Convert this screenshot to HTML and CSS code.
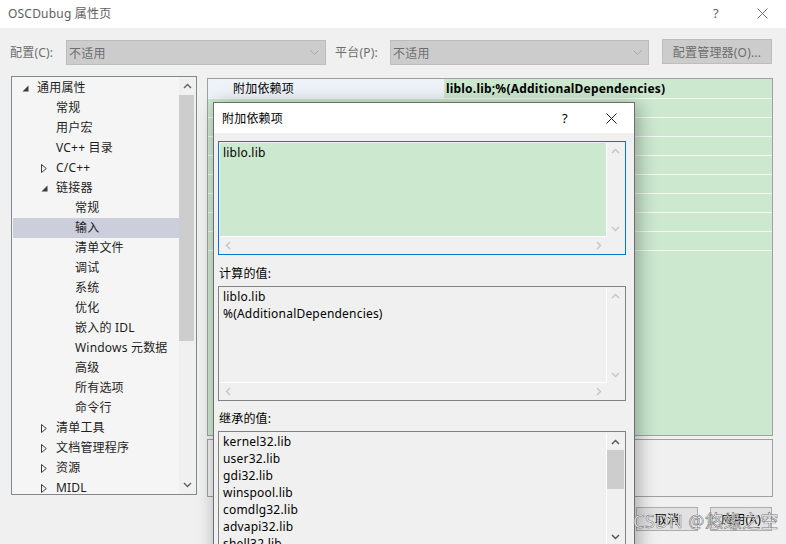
FILE: index.html
```html
<!DOCTYPE html>
<html lang="zh-CN">
<head>
<meta charset="utf-8">
<title>OSCDubug 属性页</title>
<link rel="stylesheet" href="styles.css">
</head>
<body>
<div class="window">
  <div class="titlebar">
    <span class="title">OSCDubug 属性页</span>
    <span class="tb-btn">?</span>
    <span class="tb-btn"><svg width="11" height="11" viewBox="0 0 11 11"><path d="M0.5 0.5L10.5 10.5M10.5 0.5L0.5 10.5" stroke="#707070" stroke-width="1" fill="none"/></svg></span>
  </div>

  <div class="config">
    <span class="cfg-label">配置(C):</span>
    <div class="combo combo-1"><span>不适用</span><svg width="9" height="5" viewBox="0 0 9 5"><path d="M0.5 0.5L4.5 4.5L8.5 0.5" stroke="#a8a8a8" fill="none"/></svg></div>
    <span class="cfg-label plat">平台(P):</span>
    <div class="combo combo-2"><span>不适用</span><svg width="9" height="5" viewBox="0 0 9 5"><path d="M0.5 0.5L4.5 4.5L8.5 0.5" stroke="#a8a8a8" fill="none"/></svg></div>
    <div class="cfg-btn">配置管理器(O)...</div>
  </div>

  <div class="main">
    <div class="tree">
      <ul class="tree-list">
        <li class="tree-row l0"><span class="arr"><svg width="7" height="7" viewBox="0 0 7 7"><path d="M6.5 0.5V6.5H0.5Z" fill="#3c3c3c"/></svg></span><span>通用属性</span></li>
        <li class="tree-row l1"><span class="arr"></span><span>常规</span></li>
        <li class="tree-row l1"><span class="arr"></span><span>用户宏</span></li>
        <li class="tree-row l1"><span class="arr"></span><span>VC++ 目录</span></li>
        <li class="tree-row l1"><span class="arr"><svg width="6" height="9" viewBox="0 0 6 9"><path d="M0.5 0.5L5.3 4.5L0.5 8.5Z" fill="none" stroke="#3c3c3c"/></svg></span><span>C/C++</span></li>
        <li class="tree-row l1"><span class="arr"><svg width="7" height="7" viewBox="0 0 7 7"><path d="M6.5 0.5V6.5H0.5Z" fill="#3c3c3c"/></svg></span><span>链接器</span></li>
        <li class="tree-row l2"><span class="arr"></span><span>常规</span></li>
        <li class="tree-row l2 selected"><span class="arr"></span><span>输入</span></li>
        <li class="tree-row l2"><span class="arr"></span><span>清单文件</span></li>
        <li class="tree-row l2"><span class="arr"></span><span>调试</span></li>
        <li class="tree-row l2"><span class="arr"></span><span>系统</span></li>
        <li class="tree-row l2"><span class="arr"></span><span>优化</span></li>
        <li class="tree-row l2"><span class="arr"></span><span>嵌入的 IDL</span></li>
        <li class="tree-row l2"><span class="arr"></span><span>Windows 元数据</span></li>
        <li class="tree-row l2"><span class="arr"></span><span>高级</span></li>
        <li class="tree-row l2"><span class="arr"></span><span>所有选项</span></li>
        <li class="tree-row l2"><span class="arr"></span><span>命令行</span></li>
        <li class="tree-row l1"><span class="arr"><svg width="6" height="9" viewBox="0 0 6 9"><path d="M0.5 0.5L5.3 4.5L0.5 8.5Z" fill="none" stroke="#3c3c3c"/></svg></span><span>清单工具</span></li>
        <li class="tree-row l1"><span class="arr"><svg width="6" height="9" viewBox="0 0 6 9"><path d="M0.5 0.5L5.3 4.5L0.5 8.5Z" fill="none" stroke="#3c3c3c"/></svg></span><span>文档管理程序</span></li>
        <li class="tree-row l1"><span class="arr"><svg width="6" height="9" viewBox="0 0 6 9"><path d="M0.5 0.5L5.3 4.5L0.5 8.5Z" fill="none" stroke="#3c3c3c"/></svg></span><span>资源</span></li>
        <li class="tree-row l1 last"><span class="arr"><svg width="6" height="9" viewBox="0 0 6 9"><path d="M0.5 0.5L5.3 4.5L0.5 8.5Z" fill="none" stroke="#3c3c3c"/></svg></span><span>MIDL</span></li>
      </ul>
      <div class="tree-scroll">
        <div class="sb-btn"><svg width="9" height="6" viewBox="0 0 9 6"><path d="M1 5L4.5 1.5L8 5" fill="none" stroke="#606060" stroke-width="1.4"/></svg></div>
        <div class="tree-thumb"></div>
        <div class="sb-fill"></div>
        <div class="sb-btn"><svg width="9" height="6" viewBox="0 0 9 6"><path d="M1 1L4.5 4.5L8 1" fill="none" stroke="#606060" stroke-width="1.4"/></svg></div>
      </div>
    </div>

    <div class="right">
      <div class="grid">
        <div class="grow first"><div class="gname">附加依赖项</div><div class="gval">liblo.lib;%(AdditionalDependencies)</div></div>
        <div class="grow"><div class="gname"></div><div class="gval"></div></div>
        <div class="grow"><div class="gname"></div><div class="gval"></div></div>
        <div class="grow"><div class="gname"></div><div class="gval"></div></div>
        <div class="grow"><div class="gname"></div><div class="gval"></div></div>
        <div class="grow"><div class="gname"></div><div class="gval"></div></div>
        <div class="grow"><div class="gname"></div><div class="gval"></div></div>
        <div class="grow"><div class="gname"></div><div class="gval"></div></div>
        <div class="grow"><div class="gname"></div><div class="gval"></div></div>
      </div>
      <div class="desc"></div>
      <div class="buttons">
        <div class="btn">确定</div>
        <div class="btn">取消</div>
        <div class="btn">应用(A)</div>
      </div>
    </div>
  </div>

  <div class="dialog">
    <div class="dlg-title">
      <span class="title">附加依赖项</span>
      <span class="tb-btn">?</span>
      <span class="tb-btn"><svg width="11" height="11" viewBox="0 0 11 11"><path d="M0.5 0.5L10.5 10.5M10.5 0.5L0.5 10.5" stroke="#1a1a1a" stroke-width="1" fill="none"/></svg></span>
    </div>
    <div class="dlg-body">
      <div class="box edit">
        <div class="box-content"><div class="pad-top">liblo.lib</div></div>
        <div class="vs light">
          <svg width="9" height="6" viewBox="0 0 9 6"><path d="M1 5L4.5 1.5L8 5" fill="none" stroke="#c4c4c4" stroke-width="1.4"/></svg>
          <svg width="9" height="6" viewBox="0 0 9 6"><path d="M1 1L4.5 4.5L8 1" fill="none" stroke="#c4c4c4" stroke-width="1.4"/></svg>
        </div>
        <div class="hs">
          <svg width="6" height="9" viewBox="0 0 6 9"><path d="M5 1L1.5 4.5L5 8" fill="none" stroke="#c4c4c4" stroke-width="1.4"/></svg>
          <svg width="6" height="9" viewBox="0 0 6 9"><path d="M1 1L4.5 4.5L1 8" fill="none" stroke="#c4c4c4" stroke-width="1.4"/></svg>
        </div>
        <div class="corner"></div>
      </div>

      <div class="dlg-label">计算的值:</div>
      <div class="box ro">
        <div class="box-content">
          <div>liblo.lib</div>
          <div>%(AdditionalDependencies)</div>
        </div>
        <div class="vs light">
          <svg width="9" height="6" viewBox="0 0 9 6"><path d="M1 5L4.5 1.5L8 5" fill="none" stroke="#c4c4c4" stroke-width="1.4"/></svg>
          <svg width="9" height="6" viewBox="0 0 9 6"><path d="M1 1L4.5 4.5L8 1" fill="none" stroke="#c4c4c4" stroke-width="1.4"/></svg>
        </div>
        <div class="hs">
          <svg width="6" height="9" viewBox="0 0 6 9"><path d="M5 1L1.5 4.5L5 8" fill="none" stroke="#c4c4c4" stroke-width="1.4"/></svg>
          <svg width="6" height="9" viewBox="0 0 6 9"><path d="M1 1L4.5 4.5L1 8" fill="none" stroke="#c4c4c4" stroke-width="1.4"/></svg>
        </div>
        <div class="corner"></div>
      </div>

      <div class="dlg-label second">继承的值:</div>
      <div class="box ro inherit">
        <div class="box-content">
          <div>kernel32.lib</div>
          <div>user32.lib</div>
          <div>gdi32.lib</div>
          <div>winspool.lib</div>
          <div>comdlg32.lib</div>
          <div>advapi32.lib</div>
          <div>shell32.lib</div>
        </div>
        <div class="vs dark">
          <div class="vs-btn"><svg width="9" height="6" viewBox="0 0 9 6"><path d="M1 5L4.5 1.5L8 5" fill="none" stroke="#505050" stroke-width="1.4"/></svg></div>
          <div class="inh-thumb"></div>
          <div class="sb-fill"></div>
          <div class="vs-btn"><svg width="9" height="6" viewBox="0 0 9 6"><path d="M1 1L4.5 4.5L8 1" fill="none" stroke="#505050" stroke-width="1.4"/></svg></div>
        </div>
      </div>
    </div>
  </div>

  <div class="watermark">CSDN @悠缘之空</div>
</div>
</body>
</html>
```

FILE: styles.css
```css
* { box-sizing: border-box; margin: 0; padding: 0; }

html, body {
  width: 786px;
  height: 544px;
  overflow: hidden;
}

body {
  background: #f0f0f0;
  font-family: "Noto Sans", "Noto Sans CJK SC", sans-serif;
  font-size: 12px;
  letter-spacing: 0.2px;
  color: #000;
}

.window {
  position: relative;
  width: 786px;
  height: 544px;
  display: flex;
  flex-direction: column;
}

/* title bar */
.titlebar {
  height: 28px;
  background: #fff;
  display: flex;
  align-items: center;
  padding: 0 1px 2px 8px;
  color: #606060;
}

.titlebar .title { flex: 1; }

.tb-btn {
  width: 46px;
  display: flex;
  justify-content: center;
  align-items: center;
  font-size: 13px;
}

/* configuration row */
.config {
  height: 48px;
  display: flex;
  align-items: flex-start;
  padding: 12px 0 0 10px;
  color: #6d6d6d;
}

.cfg-label {
  width: 56px;
  height: 25px;
  line-height: 25px;
}

.cfg-label.plat {
  margin-left: 9px;
  width: 55px;
}

.combo {
  height: 25px;
  background: #cccccc;
  border: 1px solid #bdbdbd;
  display: flex;
  align-items: center;
  justify-content: space-between;
  padding: 0 6px 0 2px;
}

.combo-1 { width: 260px; }
.combo-2 { width: 259px; }

.cfg-btn {
  margin-left: 13px;
  margin-top: -1px;
  width: 110px;
  height: 25px;
  background: #cccccc;
  border: 1px solid #bdbdbd;
  display: flex;
  align-items: center;
  justify-content: center;
}

/* main area */
.main {
  display: flex;
  padding-left: 11px;
}

.tree {
  width: 186px;
  height: 419px;
  border: 1px solid #828790;
  background: #f5f5f5;
  display: flex;
}

.tree-list {
  flex: 1;
  list-style: none;
  padding: 1px 0 0 1px;
  overflow: hidden;
}

.tree-row {
  height: 20px;
  display: flex;
  align-items: center;
  color: #1e1e1e;
  white-space: nowrap;
  line-height: 16px;
}

.tree-row.l0 { padding-left: 5px; }
.tree-row.l1 { padding-left: 24px; }
.tree-row.l2 { padding-left: 43px; }

.tree-row.last { height: 16px; align-items: flex-start; padding-top: 2px; }

.tree-row.selected { background: #cccedb; }

.arr {
  width: 19px;
  flex: none;
  display: flex;
  align-items: center;
  padding-left: 4px;
}

.tree-row.last .arr { height: 16px; }

.tree-scroll {
  width: 17px;
  display: flex;
  flex-direction: column;
  background: #f0f0f0;
}

.sb-btn {
  height: 18px;
  display: flex;
  align-items: center;
  justify-content: center;
  flex: none;
}

.tree-thumb {
  height: 246px;
  margin: 0 2px 0 0;
  background: #cdcdcd;
  flex: none;
}

.sb-fill { flex: 1; }

.right {
  width: 566px;
  margin-left: 10px;
  margin-top: 2px;
}

.grid {
  height: 358px;
  border: 1px solid #a0a0a0;
  background: #cce8cf;
}

.grow {
  display: flex;
  height: 19px;
  border-bottom: 1px solid #f4f7f4;
}

.grow.first { height: 20px; }

.gname {
  width: 236px;
  padding-left: 25px;
  line-height: 19px;
}

.grow.first .gname { background: #eef3fa; }

.gval {
  flex: 1;
  padding-left: 2px;
  line-height: 19px;
  font-weight: bold;
}

.desc {
  margin-top: 3px;
  height: 58px;
  border: 1px solid #a0a0a0;
}

.buttons {
  margin-top: 10px;
  display: flex;
  justify-content: flex-end;
  gap: 12px;
  padding-right: 1px;
}

.btn {
  width: 62px;
  height: 24px;
  background: #e1e1e1;
  border: 1px solid #adadad;
  display: flex;
  align-items: center;
  justify-content: center;
}

/* dialog */
.dialog {
  position: absolute;
  left: 213px;
  top: 102px;
  width: 422px;
  height: 460px;
  border: 1px solid #6e6e6e;
  background: #f0f0f0;
  box-shadow: 3px 3px 18px rgba(0, 0, 0, 0.32);
}

.dlg-title {
  height: 30px;
  background: #fff;
  display: flex;
  align-items: center;
  padding-left: 8px;
  color: #000;
}

.dlg-title .title { flex: 1; }

.dlg-body {
  padding: 8px 8px 0 4px;
}

.box {
  border: 1px solid #828282;
  padding: 1px;
  height: 115px;
  display: grid;
  grid-template-columns: 1fr 17px;
  grid-template-rows: 1fr 16px;
  background: #f0f0f0;
}

.box.edit {
  border-color: #0078d7;
  height: 114px;
}

.box-content {
  border-right: 1px solid #fff;
  border-bottom: 1px solid #fff;
  padding: 0 3px;
  line-height: 17px;
  overflow: hidden;
  white-space: nowrap;
}

.edit .box-content { background: #cce8cf; }

.pad-top { padding-top: 1px; }

.vs {
  display: flex;
  flex-direction: column;
  align-items: center;
  justify-content: space-between;
  padding: 5px 0;
}

.vs.dark {
  padding: 0;
  justify-content: flex-start;
  align-items: stretch;
}

.vs-btn {
  height: 17px;
  display: flex;
  align-items: center;
  justify-content: center;
  flex: none;
}

.inh-thumb {
  height: 39px;
  background: #cdcdcd;
  flex: none;
}

.hs {
  display: flex;
  align-items: center;
  justify-content: space-between;
  padding: 0 5px;
}

.box.inherit {
  grid-template-rows: 1fr;
  height: 116px;
}

.box.inherit .box-content { border-bottom: none; }

.dlg-label {
  height: 17px;
  line-height: 17px;
  margin: 10px 0 4px 1px;
}

.dlg-label.second { margin-top: 9px; }

.watermark {
  position: absolute;
  left: 633px;
  top: 509px;
  font-size: 18px;
  line-height: 24px;
  letter-spacing: 0.5px;
  color: rgba(255, 255, 255, 0.9);
  -webkit-text-stroke: 0.6px rgba(95, 95, 95, 0.85);
  white-space: nowrap;
}
```
